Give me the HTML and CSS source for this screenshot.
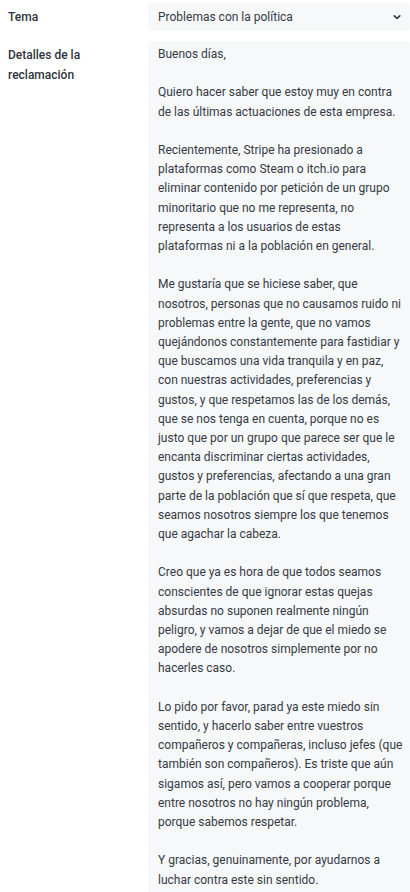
FILE: index.html
```html
<!DOCTYPE html>
<html lang="es">
<head>
<meta charset="utf-8">
<link rel="stylesheet" href="styles.css">
</head>
<body>
<div class="form">
  <div class="row">
    <div class="label">Tema</div>
    <div class="select">
      <span class="select-text">Problemas con la política</span>
      <svg class="chev" width="10" height="10" viewBox="0 0 10 10"><path d="M2.2 3.8 L5 6.4 L7.8 3.8" fill="none" stroke="#353a44" stroke-width="1.6" stroke-linecap="round" stroke-linejoin="round"/></svg>
    </div>
  </div>
  <div class="row">
    <div class="label">Detalles de la<br>reclamación</div>
    <div class="area"><p>Buenos días,</p><p>Quiero hacer saber que estoy muy en contra
de las últimas actuaciones de esta empresa.</p><p>Recientemente, Stripe ha presionado a
plataformas como Steam o itch.io para
eliminar contenido por petición de un grupo
minoritario que no me representa, no
representa a los usuarios de estas
plataformas ni a la población en general.</p><p>Me gustaría que se hiciese saber, que
nosotros, personas que no causamos ruido ni
problemas entre la gente, que no vamos
quejándonos constantemente para fastidiar y
que buscamos una vida tranquila y en paz,
con nuestras actividades, preferencias y
gustos, y que respetamos las de los demás,
que se nos tenga en cuenta, porque no es
justo que por un grupo que parece ser que le
encanta discriminar ciertas actividades,
gustos y preferencias, afectando a una gran
parte de la población que sí que respeta, que
seamos nosotros siempre los que tenemos
que agachar la cabeza.</p><p>Creo que ya es hora de que todos seamos
conscientes de que ignorar estas quejas
absurdas no suponen realmente ningún
peligro, y vamos a dejar de que el miedo se
apodere de nosotros simplemente por no
hacerles caso.</p><p>Lo pido por favor, parad ya este miedo sin
sentido, y hacerlo saber entre vuestros
compañeros y compañeras, incluso jefes (que
también son compañeros). Es triste que aún
sigamos así, pero vamos a cooperar porque
entre nosotros no hay ningún problema,
porque sabemos respetar.</p><p>Y gracias, genuinamente, por ayudarnos a
luchar contra este sin sentido.</p></div>
  </div>
</div>
</body>
</html>
```

FILE: styles.css
```css
html, body {
  margin: 0;
  padding: 0;
  background: #ffffff;
  overflow: hidden;
}
body {
  font-family: Roboto, "Noto Sans", sans-serif;
  font-size: 12px;
  color: #353a44;
}
.form {
  display: flex;
  flex-direction: column;
  gap: 10px;
  padding: 3px 0 0 8px;
}
.row {
  display: flex;
  align-items: flex-start;
}
.label {
  width: 140px;
  flex: none;
  font-weight: 500;
  font-size: 12px;
  line-height: 20px;
  color: #30343c;
  padding-top: 4px;
}
.select {
  flex: none;
  width: 262px;
  height: 28px;
  box-sizing: border-box;
  background: #f6f8fa;
  border-radius: 4px;
  display: flex;
  align-items: center;
  justify-content: space-between;
  padding: 0 8px 0 10px;
}
.select-text {
  font-size: 12px;
  color: #353a44;
}
.chev {
  display: block;
}
.area {
  flex: none;
  width: 262px;
  box-sizing: border-box;
  background: #f6f8fa;
  border-radius: 4px;
  padding: 4px 10px 0 10px;
  font-size: 12px;
  line-height: 19.2px;
  color: #353a44;
  white-space: pre;
}
.area p {
  margin: 0 0 19.2px 0;
}
```
